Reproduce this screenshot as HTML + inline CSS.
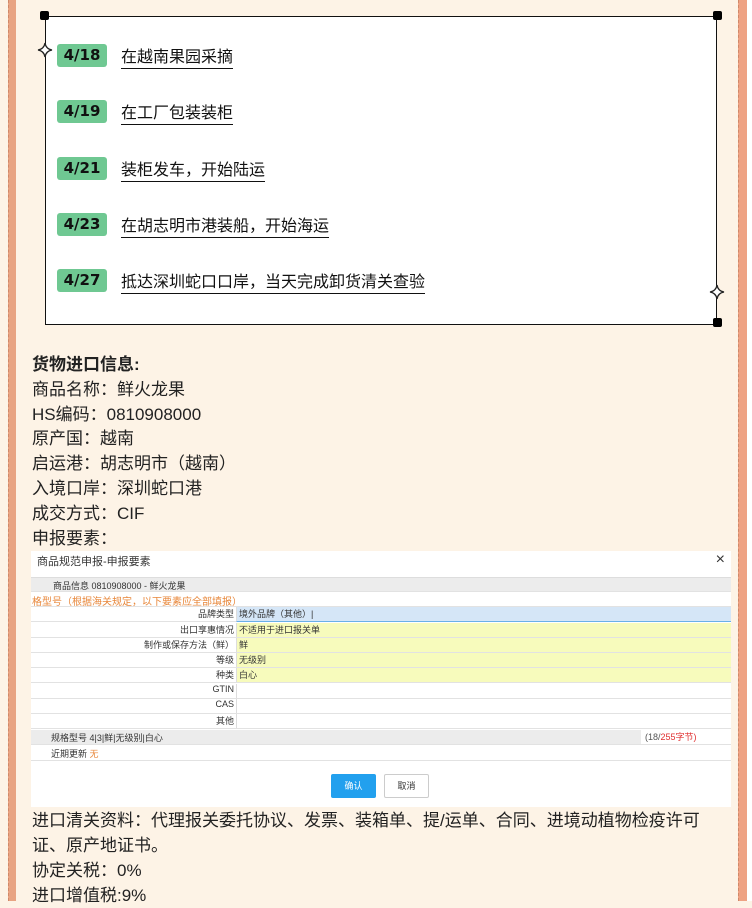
<!DOCTYPE html><html><head><meta charset="utf-8"><style>
body{margin:0;width:752px;height:901px;background:#fdf3e6;position:relative;overflow:hidden;font-family:"Liberation Sans","Noto Sans CJK SC",sans-serif}
.ls{position:absolute;left:8px;top:0;width:8px;height:901px;background:#e8a382;border-left:1px dashed #d08868;box-sizing:border-box}
.rs{position:absolute;left:738px;top:0;width:9px;height:901px;background:#eea283;border-left:1px dashed #d08868;box-sizing:border-box}
.rw{position:absolute;left:747px;top:0;width:5px;height:901px;background:#fff}
.box{position:absolute;left:45px;top:16px;width:672px;height:309px;border:1px solid #111;background:#fff;box-sizing:border-box}
.sq{position:absolute;width:9px;height:9px;background:#000;border-radius:2px}
.it{position:absolute;left:57px;height:22px}
.tag{position:absolute;left:0;top:0;width:50px;height:23px;background:#6fc892;border-radius:3px;font-weight:bold;font-size:15px;text-align:center;line-height:23px;color:#111;font-family:"DejaVu Sans",sans-serif}
.tx{position:absolute;left:64px;top:3px;font-size:16px;color:#111;white-space:nowrap;border-bottom:1.5px solid #111;line-height:21px}
.info{position:absolute;left:32px;top:353px;font-size:17px;line-height:24.8px;color:#222}
.dlg{position:absolute;left:31px;top:551px;width:700px;height:256px;background:#fff;font-size:9px;color:#333}
.r{position:absolute;left:0;width:700px;height:15px;border-bottom:1px solid #e2e2e2;box-sizing:border-box}
.lb{position:absolute;right:497px;top:0;text-align:right;white-space:nowrap}
.v{position:absolute;left:205px;top:0;right:0;height:14px;padding-left:2px;line-height:14px;border-left:1px solid #ddd}
.bot{position:absolute;left:32px;top:808px;width:700px;font-size:17px;line-height:25px;color:#222}
</style></head><body>
<div class="ls"></div><div class="rs"></div><div class="rw"></div>
<div class="box"></div>
<div class="sq" style="left:40px;top:11px"></div><div class="sq" style="left:713px;top:11px"></div><div class="sq" style="left:713px;top:318px"></div>
<svg style="position:absolute;left:37px;top:42px" width="16" height="16" viewBox="0 0 16 16"><path d="M8 1 Q9 7 15 8 Q9 9 8 15 Q7 9 1 8 Q7 7 8 1Z" fill="#fff" stroke="#222" stroke-width="1.3"/></svg>
<svg style="position:absolute;left:709px;top:284px" width="16" height="16" viewBox="0 0 16 16"><path d="M8 1 Q9 7 15 8 Q9 9 8 15 Q7 9 1 8 Q7 7 8 1Z" fill="#fff" stroke="#222" stroke-width="1.3"/></svg>
<div class="it" style="top:44px"><div class="tag">4/18</div><div class="tx">在越南果园采摘</div></div>
<div class="it" style="top:100px"><div class="tag">4/19</div><div class="tx">在工厂包装装柜</div></div>
<div class="it" style="top:157px"><div class="tag">4/21</div><div class="tx">装柜发车，开始陆运</div></div>
<div class="it" style="top:213px"><div class="tag">4/23</div><div class="tx">在胡志明市港装船，开始海运</div></div>
<div class="it" style="top:269px"><div class="tag">4/27</div><div class="tx">抵达深圳蛇口口岸，当天完成卸货清关查验</div></div>
<div class="info"><b>货物进口信息:</b><br>商品名称：鲜火龙果<br>HS编码：0810908000<br>原产国：越南<br>启运港：胡志明市（越南）<br>入境口岸：深圳蛇口港<br>成交方式：CIF<br>申报要素：</div>
<div class="dlg">
<div style="position:absolute;left:6px;top:2px;font-size:11px;color:#333">商品规范申报-申报要素</div>
<div style="position:absolute;right:6px;top:0;font-size:16px;color:#333">×</div>
<div class="r" style="top:26px;background:#ececec;border-top:1px solid #ddd"><span style="position:absolute;left:22px;top:1px">商品信息 0810908000 - 鲜火龙果</span></div>
<div class="r" style="top:41px;color:#e8873a;font-size:10px"><span style="position:absolute;left:1px;top:1px">格型号（根据海关规定，以下要素应全部填报）</span></div>
<div class="r" style="top:56px"><span class="lb">品牌类型</span><div class="v" style="background:#d5e6f7;border-bottom:1px solid #6ab0e8">境外品牌（其他）|</div></div>
<div class="r" style="top:72px"><span class="lb">出口享惠情况</span><div class="v" style="background:#f7fbbc">不适用于进口报关单</div></div>
<div class="r" style="top:87px"><span class="lb">制作或保存方法（鲜）</span><div class="v" style="background:#f7fbbc">鲜</div></div>
<div class="r" style="top:102px"><span class="lb">等级</span><div class="v" style="background:#f7fbbc">无级别</div></div>
<div class="r" style="top:117px"><span class="lb">种类</span><div class="v" style="background:#f7fbbc">白心</div></div>
<div class="r" style="top:133px"><span class="lb">GTIN</span><div class="v"></div></div>
<div class="r" style="top:148px"><span class="lb">CAS</span><div class="v"></div></div>
<div class="r" style="top:163px"><span class="lb">其他</span><div class="v"></div></div>
<div class="r" style="top:179px;background:#ececec"><span style="position:absolute;left:20px;top:1px">规格型号 4|3|鲜|无级别|白心</span><span style="position:absolute;left:610px;top:0;width:90px;height:14px;background:#fff;color:#e03030;padding-left:4px;box-sizing:border-box"><span style="color:#555">(18/</span>255字节)</span></div>
<div class="r" style="top:195px"><span style="position:absolute;left:20px;top:1px">近期更新 <span style="color:#e8873a">无</span></span></div>
<div style="position:absolute;left:300px;top:223px;width:45px;height:24px;background:#22a0ee;border-radius:2px;color:#fff;text-align:center;line-height:24px">确认</div>
<div style="position:absolute;left:353px;top:223px;width:45px;height:24px;border:1px solid #ccc;box-sizing:border-box;border-radius:2px;text-align:center;line-height:22px">取消</div>
</div>
<div class="bot">进口清关资料：代理报关委托协议、发票、装箱单、提/运单、合同、进境动植物检疫许可证、原产地证书。<br>协定关税：0%<br>进口增值税:9%</div>
</body></html>
